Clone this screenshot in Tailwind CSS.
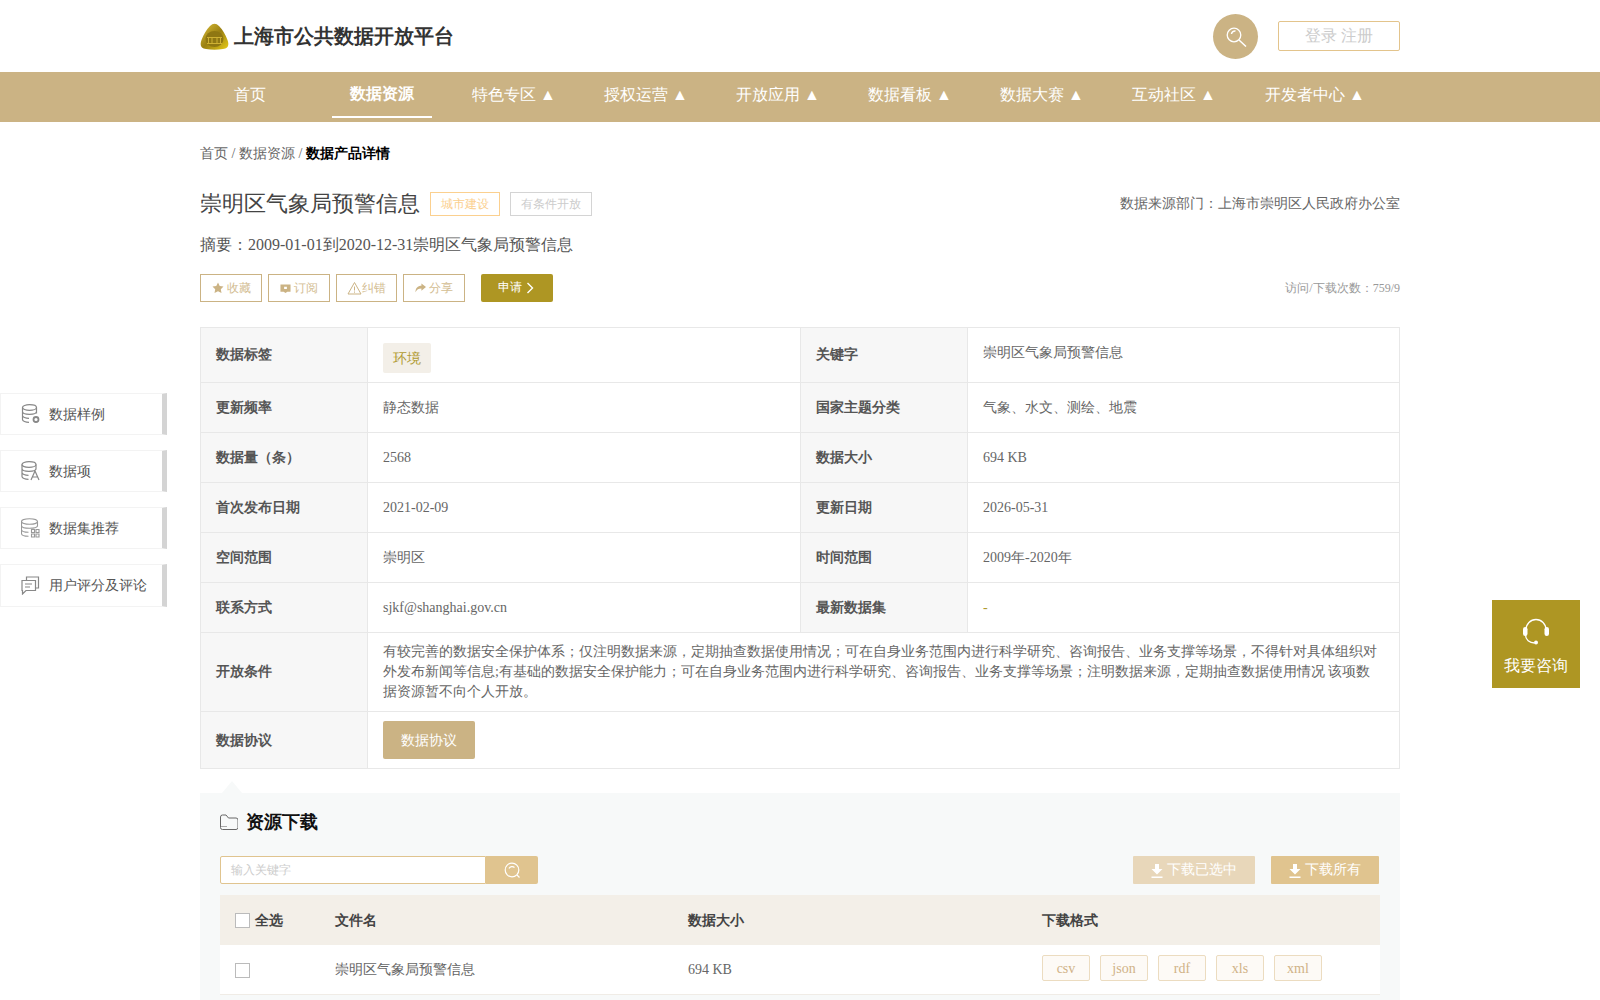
<!DOCTYPE html>
<html>
<head>
<meta charset="utf-8">
<script src="https://cdn.jsdelivr.net/npm/@tailwindcss/browser@4"></script>
</head>
<body class="font-['Liberation_Serif',serif] text-[#666] bg-white">
<div class="relative h-[1000px] overflow-hidden">

  <header class="h-[72px] flex justify-center">
    <div class="w-[1200px] flex items-center">
      <svg class="w-[29px] h-[27px] mr-[5px]" viewBox="0 0 29 27">
        <defs><linearGradient id="g" x1="0" y1="0" x2="1" y2="1"><stop offset="0" stop-color="#e0c23a"/><stop offset=".5" stop-color="#9a8012"/><stop offset="1" stop-color="#e8cc18"/></linearGradient></defs>
        <path d="M10 3 Q14.500 -1.500 19 3 Q24 8 27.500 17 Q30.500 25 23 26 Q14.500 27.500 6 26 Q-1.500 25 1.500 17 Q5 8 10 3Z" fill="url(#g)"/>
        <ellipse cx="14.500" cy="16" rx="9" ry="8" fill="#8f7712"/>
        <path d="M8.500 20 v-5 M12 20 v-5 M17 20 v-5 M20.500 20 v-5 M7 14.500 h15 M7 20.500 h15" stroke="#d6b838" stroke-width=".9" fill="none"/>
      </svg>
      <div class="text-[20px] font-bold text-[#333]">上海市公共数据开放平台</div>
      <div class="ml-auto w-[45px] h-[45px] rounded-full bg-[#cbb384] flex items-center justify-center">
        <svg class="w-[21px] h-[20px] mt-[1px] ml-[2px]" viewBox="0 0 21 20" fill="none" stroke="#fff"><circle cx="8" cy="8" r="6.800" stroke-width="1.300"/><path d="M5.500 7a3.500 3.500 0 0 1 4-3M13 13 20 19.500" stroke-width="1.500"/></svg>
      </div>
      <div class="ml-[20px] w-[122px] h-[30px] border border-[#e3c48c] rounded-[2px] flex items-center justify-center text-[16px] text-[#ccc]">登录 注册</div>
    </div>
  </header>

  <nav class="h-[50px] bg-[#cbb384] flex justify-center">
    <div class="w-[1200px] flex gap-[32px] text-[16px] text-white">
      <a class="w-[100px] h-[46px] flex items-center justify-center">首页</a>
      <a class="w-[100px] h-[46px] flex items-center justify-center font-bold border-b-2 border-white">数据资源</a>
      <a class="w-[100px] h-[46px] flex items-center justify-center">特色专区 ▲</a>
      <a class="w-[100px] h-[46px] flex items-center justify-center">授权运营 ▲</a>
      <a class="w-[100px] h-[46px] flex items-center justify-center">开放应用 ▲</a>
      <a class="w-[100px] h-[46px] flex items-center justify-center">数据看板 ▲</a>
      <a class="w-[100px] h-[46px] flex items-center justify-center">数据大赛 ▲</a>
      <a class="w-[100px] h-[46px] flex items-center justify-center">互动社区 ▲</a>
      <a class="w-[118px] h-[46px] flex items-center justify-center">开发者中心 ▲</a>
    </div>
  </nav>

  <main class="w-[1200px] mx-auto">
    <div class="pt-[23px] text-[14px] leading-[18px] text-[#666]">首页 / 数据资源 / <span class="font-bold text-black">数据产品详情</span></div>

    <div class="mt-[29px] flex items-center h-[24px]">
      <h1 class="text-[22px] text-[#444] pb-[2px]">崇明区气象局预警信息</h1>
      <span class="ml-[10px] w-[70px] h-[24px] border border-[#fbd08f] flex items-center justify-center text-[12px] text-[#fbd08f]">城市建设</span>
      <span class="ml-[10px] w-[82px] h-[24px] border border-[#d4d4d4] flex items-center justify-center text-[12px] text-[#ccc]">有条件开放</span>
      <span class="ml-auto text-[14px] text-[#666] pb-[2px]">数据来源部门：上海市崇明区人民政府办公室</span>
    </div>

    <p class="mt-[17px] text-[16px] leading-[24px] text-[#555]">摘要：2009-01-01到2020-12-31崇明区气象局预警信息</p>

    <div class="mt-[17px] h-[28px] flex items-center text-[12px] text-[#d3bd92]">
      <a class="w-[62px] h-[28px] border border-[#cbb384] flex items-center justify-center gap-[3px]">
        <svg class="w-[12px] h-[12px]" viewBox="0 0 12 12" fill="#cbb384"><path d="M6 .5 7.700 4 11.500 4.500 8.800 7.200 9.500 11 6 9.200 2.500 11 3.200 7.200 .5 4.500 4.300 4Z"/></svg>收藏</a>
      <a class="ml-[6px] w-[62px] h-[28px] border border-[#cbb384] flex items-center justify-center gap-[3px]">
        <svg class="w-[11px] h-[11px]" viewBox="0 0 12 12" fill="#cbb384"><path fill-rule="evenodd" d="M.5 1.500h11v8h-3.500L6 11 4 9.500H.5ZM4.500 4h3v2.500h-3Z"/></svg>订阅</a>
      <a class="ml-[6px] w-[61px] h-[28px] border border-[#cbb384] flex items-center justify-center">
        <svg class="w-[15px] h-[14px]" viewBox="0 0 15 14" fill="none" stroke="#cbb384"><path d="M7.500 1.500 14 13H1ZM7.500 5.500v4M7.500 10.500v1.200"/></svg>纠错</a>
      <a class="ml-[6px] w-[62px] h-[28px] border border-[#cbb384] flex items-center justify-center gap-[3px]">
        <svg class="w-[11px] h-[10px]" viewBox="0 0 12 10" fill="#cbb384"><path d="M7 0 12 4 7 8V5.500C4 5.500 2 6.500 .5 9.500.5 5 3 2.500 7 2.500Z"/></svg>分享</a>
      <a class="ml-[16px] w-[72px] h-[28px] bg-[#ae9623] rounded-[2px] flex items-center justify-center gap-[4px] text-white pb-[3px] pr-[3px]">申请
        <svg class="w-[8px] h-[12px] mt-[3px]" viewBox="0 0 8 12" fill="none" stroke="#fff" stroke-width="1.400"><path d="M1.500 1 6.500 6 1.500 11"/></svg></a>
      <span class="ml-auto text-[12px] text-[#999]">访问/下载次数：759/9</span>
    </div>

    <table class="mt-[25px] w-[1199px] table-fixed border-collapse text-[14px] text-[#666]">
      <colgroup><col class="w-[167px]"><col class="w-[433px]"><col class="w-[167px]"><col class="w-[432px]"></colgroup>
      <tbody>
        <tr class="h-[55px]">
          <th class="border border-[#e8e8e8] bg-[#f7f7f7] text-left pl-[15px] pb-[2px] font-bold text-[#555]">数据标签</th>
          <td class="border border-[#e8e8e8] pl-[15px]"><span class="mt-[6px] w-[48px] h-[30px] bg-[#f3efe8] rounded-[2px] flex items-center justify-center text-[#b09a30]">环境</span></td>
          <th class="border border-[#e8e8e8] bg-[#f7f7f7] text-left pl-[15px] pb-[2px] font-bold text-[#555]">关键字</th>
          <td class="border border-[#e8e8e8] pl-[15px] pb-[6px]">崇明区气象局预警信息</td>
        </tr>
        <tr class="h-[50px]">
          <th class="border border-[#e8e8e8] bg-[#f7f7f7] text-left pl-[15px] font-bold text-[#555]">更新频率</th>
          <td class="border border-[#e8e8e8] pl-[15px]">静态数据</td>
          <th class="border border-[#e8e8e8] bg-[#f7f7f7] text-left pl-[15px] font-bold text-[#555]">国家主题分类</th>
          <td class="border border-[#e8e8e8] pl-[15px]">气象、水文、测绘、地震</td>
        </tr>
        <tr class="h-[50px]">
          <th class="border border-[#e8e8e8] bg-[#f7f7f7] text-left pl-[15px] font-bold text-[#555]">数据量（条）</th>
          <td class="border border-[#e8e8e8] pl-[15px]">2568</td>
          <th class="border border-[#e8e8e8] bg-[#f7f7f7] text-left pl-[15px] font-bold text-[#555]">数据大小</th>
          <td class="border border-[#e8e8e8] pl-[15px]">694 KB</td>
        </tr>
        <tr class="h-[50px]">
          <th class="border border-[#e8e8e8] bg-[#f7f7f7] text-left pl-[15px] font-bold text-[#555]">首次发布日期</th>
          <td class="border border-[#e8e8e8] pl-[15px]">2021-02-09</td>
          <th class="border border-[#e8e8e8] bg-[#f7f7f7] text-left pl-[15px] font-bold text-[#555]">更新日期</th>
          <td class="border border-[#e8e8e8] pl-[15px]">2026-05-31</td>
        </tr>
        <tr class="h-[50px]">
          <th class="border border-[#e8e8e8] bg-[#f7f7f7] text-left pl-[15px] font-bold text-[#555]">空间范围</th>
          <td class="border border-[#e8e8e8] pl-[15px]">崇明区</td>
          <th class="border border-[#e8e8e8] bg-[#f7f7f7] text-left pl-[15px] font-bold text-[#555]">时间范围</th>
          <td class="border border-[#e8e8e8] pl-[15px]">2009年-2020年</td>
        </tr>
        <tr class="h-[50px]">
          <th class="border border-[#e8e8e8] bg-[#f7f7f7] text-left pl-[15px] font-bold text-[#555]">联系方式</th>
          <td class="border border-[#e8e8e8] pl-[15px]">sjkf@shanghai.gov.cn</td>
          <th class="border border-[#e8e8e8] bg-[#f7f7f7] text-left pl-[15px] font-bold text-[#555]">最新数据集</th>
          <td class="border border-[#e8e8e8] pl-[15px] text-[#b09a30]">-</td>
        </tr>
        <tr class="h-[79px]">
          <th class="border border-[#e8e8e8] bg-[#f7f7f7] text-left pl-[15px] pb-[2px] font-bold text-[#555]">开放条件</th>
          <td colspan="3" class="border border-[#e8e8e8] pl-[15px] pr-[20px] leading-[20px]">有较完善的数据安全保护体系；仅注明数据来源，定期抽查数据使用情况；可在自身业务范围内进行科学研究、咨询报告、业务支撑等场景，不得针对具体组织对外发布新闻等信息;有基础的数据安全保护能力；可在自身业务范围内进行科学研究、咨询报告、业务支撑等场景；注明数据来源，定期抽查数据使用情况 该项数据资源暂不向个人开放。</td>
        </tr>
        <tr class="h-[57px]">
          <th class="border border-[#e8e8e8] bg-[#f7f7f7] text-left pl-[15px] font-bold text-[#555]">数据协议</th>
          <td colspan="3" class="border border-[#e8e8e8] pl-[15px]"><span class="w-[92px] h-[38px] bg-[#cbb384] rounded-[2px] flex items-center justify-center text-white">数据协议</span></td>
        </tr>
      </tbody>
    </table>

    <section class="relative mt-[24px] bg-[#f7f9f9] px-[20px] h-[300px]">
      <div class="absolute left-[22px] top-[-12px] w-0 h-0 border-x-[10px] border-x-transparent border-b-[12px] border-b-[#f7f9f9]"></div>
      <div class="h-[63px] flex items-center gap-[8px] pb-[5px]">
        <svg class="w-[18px] h-[16px]" viewBox="0 0 18 16" fill="none" stroke="#666"><path d="M.5 13.500V3a2 2 0 0 1 2-2h3.500l2.500 3h7.500a2 2 0 0 1 2 2v7.500a2 2 0 0 1-2 2h-13.500a2 2 0 0 1-2-2Z"/><path d="M1 12.500h6" stroke="#aaa"/></svg>
        <h2 class="text-[18px] font-bold text-[#111]">资源下载</h2>
      </div>
      <div class="flex items-center h-[28px]">
        <div class="w-[266px] h-[28px] bg-white border border-[#e0c48f] rounded-l-[2px] pl-[10px] flex items-center text-[12px] text-[#ccc]">输入关键字</div>
        <div class="w-[52px] h-[28px] bg-[#e0c48f] rounded-r-[2px] flex items-center justify-center">
          <svg class="w-[17px] h-[17px]" viewBox="0 0 17 17" fill="none" stroke="#fff" stroke-width="1.200"><circle cx="8" cy="8" r="6.800"/><path d="M5 6.500a3.500 3.500 0 0 1 5.500-1M13 13l2.500 2.500"/></svg>
        </div>
        <a class="ml-auto w-[122px] h-[28px] bg-[#e8d7ba] rounded-[1px] flex items-center justify-center gap-[4px] text-[14px] text-white pb-[2px] pr-[1px]">
          <svg class="w-[12px] h-[14px] mt-[3px]" viewBox="0 0 12 14" fill="#fff"><path d="M4 0h4v5h3.500L6 10.500.5 5H4ZM.5 12.500h11V14H.5Z"/></svg>下载已选中</a>
        <a class="ml-[16px] w-[108px] h-[28px] mr-[1px] bg-[#e0c48f] rounded-[1px] flex items-center justify-center gap-[4px] text-[14px] text-white pb-[2px] pr-[1px]">
          <svg class="w-[12px] h-[14px] mt-[3px]" viewBox="0 0 12 14" fill="#fff"><path d="M4 0h4v5h3.500L6 10.500.5 5H4ZM.5 12.500h11V14H.5Z"/></svg>下载所有</a>
      </div>
      <div class="mt-[11px] h-[50px] bg-[#f3efe8] flex items-center text-[14px] font-bold text-[#444]">
        <div class="w-[115px] flex items-center pl-[15px] gap-[5px]"><span class="w-[15px] h-[15px] bg-white border border-[#bbb] mt-[1px]"></span>全选</div>
        <div class="w-[353px]">文件名</div>
        <div class="w-[354px]">数据大小</div>
        <div>下载格式</div>
      </div>
      <div class="h-[50px] bg-white border-b border-[#f0ece6] flex items-center text-[14px] text-[#666]">
        <div class="w-[115px] pl-[15px]"><span class="block w-[15px] h-[15px] bg-white border border-[#bbb] mt-[2px]"></span></div>
        <div class="w-[353px]">崇明区气象局预警信息</div>
        <div class="w-[354px]">694 KB</div>
        <div class="flex gap-[10px] text-[#d0b287] -mt-[3px]">
          <span class="w-[48px] h-[26px] bg-[#fdfaf6] border border-[#ecdcc0] rounded-[2px] flex items-center justify-center">csv</span>
          <span class="w-[48px] h-[26px] bg-[#fdfaf6] border border-[#ecdcc0] rounded-[2px] flex items-center justify-center">json</span>
          <span class="w-[48px] h-[26px] bg-[#fdfaf6] border border-[#ecdcc0] rounded-[2px] flex items-center justify-center">rdf</span>
          <span class="w-[48px] h-[26px] bg-[#fdfaf6] border border-[#ecdcc0] rounded-[2px] flex items-center justify-center">xls</span>
          <span class="w-[48px] h-[26px] bg-[#fdfaf6] border border-[#ecdcc0] rounded-[2px] flex items-center justify-center">xml</span>
        </div>
      </div>
    </section>
  </main>

  <aside class="absolute left-0 top-[393px] w-[167px] flex flex-col gap-[15px] text-[14px] text-[#555]">
    <a class="h-[42px] border border-[#f3f3f3] border-r-[5px] border-r-[#d4d4d4] flex items-center pl-[20px] gap-[9px] bg-white">
      <svg class="w-[19px] h-[20px]" viewBox="0 0 19 20" fill="none" stroke="#888" stroke-width="1.200"><ellipse cx="8.500" cy="3.500" rx="7" ry="2.800"/><path d="M1.500 3.500v12c0 1.500 3 2.800 6.500 2.800M15.500 3.500v6M1.500 7.500c0 1.500 3 2.800 7 2.800s7-1.300 7-2.800M1.500 11.500c0 1.500 3 2.800 6.500 2.800"/><circle cx="15" cy="15.500" r="2.500" stroke-width="1.800"/></svg>数据样例</a>
    <a class="h-[42px] border border-[#f3f3f3] border-r-[5px] border-r-[#d4d4d4] flex items-center pl-[20px] gap-[9px] bg-white">
      <svg class="w-[19px] h-[20px]" viewBox="0 0 19 20" fill="none" stroke="#888" stroke-width="1.200"><ellipse cx="8" cy="3.500" rx="7" ry="2.800"/><path d="M1 3.500v12c0 1.500 3 2.800 6.500 2.800M15 3.500v5M1 7.500c0 1.500 3 2.800 7 2.800s7-1.300 7-2.800M1 11.500c0 1.500 3 2.800 6.500 2.800M10 19l4-9 4 9M11.500 16h5" /></svg>数据项</a>
    <a class="h-[42px] border border-[#f3f3f3] border-r-[5px] border-r-[#d4d4d4] flex items-center pl-[20px] gap-[9px] bg-white">
      <svg class="w-[19px] h-[20px]" viewBox="0 0 19 20" fill="none" stroke="#999" stroke-width="1.100"><ellipse cx="8.500" cy="3.500" rx="8" ry="2.800"/><path d="M.5 3.500v12c0 1.500 3 2.800 7 2.800M16.500 3.500v5M.5 7.500c0 1.500 3 2.800 8 2.800s8-1.300 8-2.800M.5 11.500c0 1.500 3 2.800 7 2.800M10.500 11.500h3v3h-3ZM15 11.500h3v3h-3ZM10.500 16h3v3h-3ZM15 16h3v3h-3Z"/></svg>数据集推荐</a>
    <a class="h-[43px] border border-[#f3f3f3] border-r-[5px] border-r-[#d4d4d4] flex items-center pl-[20px] gap-[9px] bg-white">
      <svg class="w-[19px] h-[19px]" viewBox="0 0 19 19" fill="none" stroke="#888" stroke-width="1.200"><path d="M5.500 4V1h12v11h-2.500"/><path d="M1 4.500h13.500v10H5l-3.500 3.500V14.500H1ZM4 8h7M4 11h5"/></svg>用户评分及评论</a>
  </aside>

  <div class="absolute left-[1492px] top-[600px] w-[88px] h-[88px] bg-[#ae9623] flex flex-col items-center text-[16px] text-white">
    <svg class="w-[26px] h-[27px] mt-[18px]" viewBox="0 0 26 27" fill="none"><path d="M3 12V11.500A10 10 0 0 1 23 11.500V12" stroke="#fff" stroke-width="1.300"/><rect x="0" y="9" width="4.500" height="9" rx="2.200" fill="#fff"/><rect x="21.500" y="9" width="4.500" height="9" rx="2.200" fill="#fff"/><path d="M2.500 17c0 4.500 4 8 9 8" stroke="#fff" stroke-width="1.300"/><circle cx="13" cy="24.500" r="2" fill="#fff"/></svg>
    <div class="mt-[9px] leading-[24px]">我要咨询</div>
  </div>
</div>
</body>
</html>
